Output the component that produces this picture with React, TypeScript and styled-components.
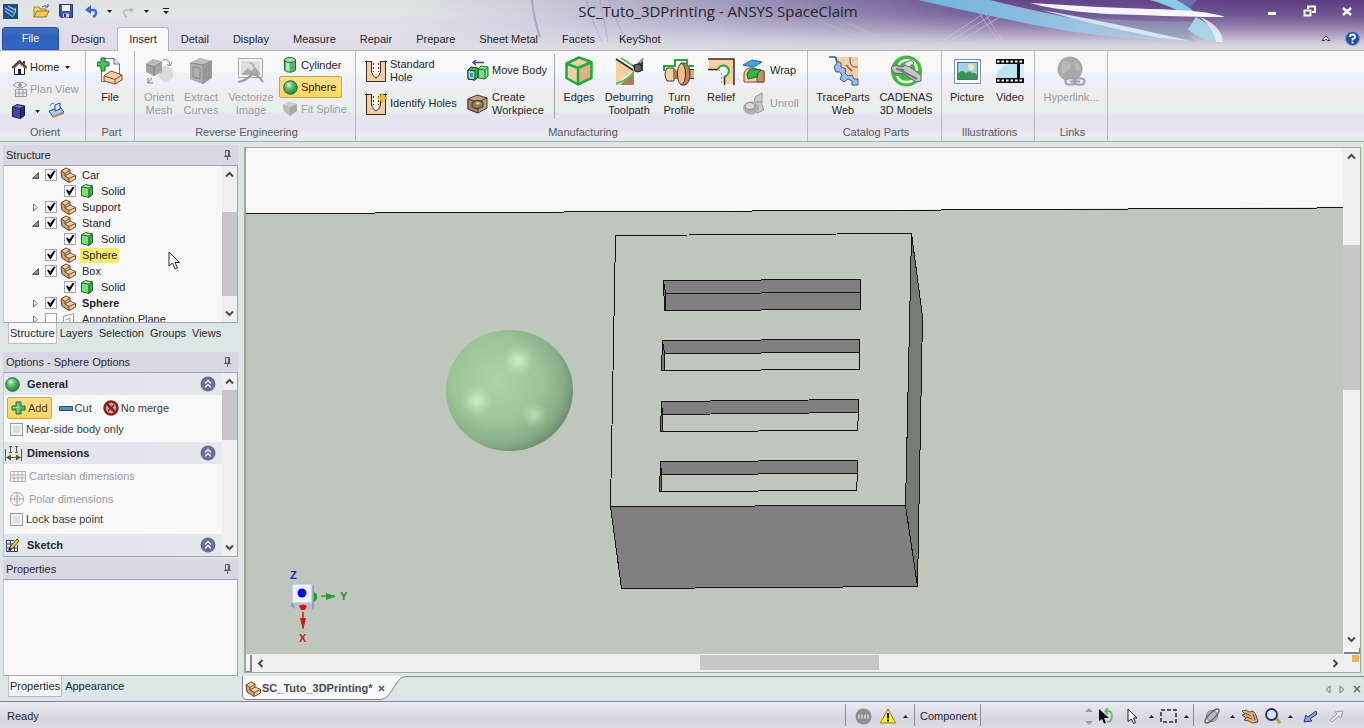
import React from "react";
import styled, { createGlobalStyle, css } from "styled-components";

const GlobalStyle = createGlobalStyle`
  *, *::before, *::after { box-sizing: border-box; }
  html, body { margin: 0; padding: 0; height: 100%; }
  body { font-family: "Liberation Sans", Arial, sans-serif; font-size: 11px; line-height: 13px; color: #26262c; overflow: hidden; }
  #root { height: 100%; }
  button { font: inherit; color: inherit; background: none; border: 0; padding: 0; margin: 0; }
  svg { display: block; flex: none; }
`;

const INK = "#2a2430";
const TAN = "#f4cfa6";
const BROWN = "#7a4a2b";
const GREEN = "#1faa3c";

/* ---------- shell ---------- */

const Shell = styled.div`
  display: flex;
  flex-direction: column;
  height: 100vh;
  background: #dde6e7;
`;

const Header = styled.header`
  position: relative;
  flex: none;
  background: linear-gradient(180deg, #dfe2e2 0, #dfe8e5 16px, #e0dfe8 20px, #dfdce8 100%);
  overflow: hidden;
`;

const Banner = styled.svg`
  position: absolute;
  top: 0;
  right: 0;
`;

const TitleRow = styled.div`
  position: relative;
  display: flex;
  align-items: center;
  height: 22px;
`;

const QuickAccess = styled.div`
  display: flex;
  align-items: center;
  width: 174px;
  padding-left: 3px;
`;

const Slot = styled.button<{ $w: number }>`
  display: flex;
  align-items: center;
  justify-content: center;
  flex: none;
  width: ${(p) => p.$w}px;
  height: 20px;
`;

const QuickDivider = styled.i`
  width: 1px;
  height: 15px;
  margin: 0 6px 0 8px;
  background: #8a8a94;
`;

const AppTitle = styled.h1`
  flex: 1;
  margin: 0;
  font: 400 15px/22px "Open Sans", "Noto Sans", sans-serif;
  text-align: center;
  color: #25222b;
`;

const WindowControls = styled.div`
  display: flex;
  align-items: center;
  justify-content: space-between;
  width: 102px;
  padding: 0 10px 0 3px;
`;

const TabRow = styled.nav`
  position: relative;
  display: flex;
  align-items: stretch;
  height: 29px;
  padding: 5px 4px 0 2px;
  border-bottom: 1px solid #b3b3bd;
`;

const RibbonTab = styled.button<{ $kind?: "file" | "active" }>`
  flex: none;
  height: 23px;
  padding: 0 11px;
  border: 1px solid transparent;
  border-bottom: 0;
  ${(p) =>
    p.$kind === "file" &&
    css`
      width: 57px;
      border: 1px solid #2b52a0;
      border-radius: 3px 3px 0 0;
      color: #f4f6fb;
      background: linear-gradient(180deg, #3f6fc0, #2f62b8 45%, #3268c8);
    `}
  ${(p) =>
    p.$kind === "active" &&
    css`
      height: 24px;
      border-color: #b3b3bd;
      border-radius: 3px 3px 0 0;
      background: #f8f8f8;
    `}
`;

const HeaderTools = styled.div`
  display: flex;
  align-items: center;
  gap: 14px;
  margin-left: auto;
`;

/* ---------- ribbon ---------- */

const Ribbon = styled.section`
  display: flex;
  flex: none;
  height: 91px;
  padding-left: 2px;
  border-bottom: 1px solid #a9aeb8;
  background: linear-gradient(
    180deg,
    #f8f8f8 0, #f8f8f8 21px,
    #edf4f5 22px, #edf4f5 26px,
    #f0eefa 28px, #f0eefa 36px,
    #ededed 38px, #ededed 51px,
    #e8f0ed 53px, #e8f0ed 60px,
    #e6e4ef 63px, #e6e4ef 79px,
    #eaebef 84px, #e6eaec 100%
  );
`;

const Group = styled.div<{ $w: number }>`
  display: flex;
  flex-direction: column;
  flex: none;
  width: ${(p) => p.$w}px;
  border-right: 1px solid #b9b9c4;
`;

const GroupBody = styled.div<{ $pad?: number }>`
  display: flex;
  flex: 1;
  padding: 3px 0 0 ${(p) => p.$pad ?? 0}px;
`;

const GroupLabel = styled.div`
  height: 15px;
  padding-left: 3px;
  text-align: center;
  color: #55565f;
`;

const BigButton = styled.button<{ $w: number }>`
  display: flex;
  flex-direction: column;
  align-items: center;
  flex: none;
  width: ${(p) => p.$w}px;
  height: 66px;
  white-space: pre-line;
  &:disabled { color: #9b9ba3; }
`;

const BigIcon = styled.span`
  display: flex;
  align-items: center;
  justify-content: center;
  height: 34px;
  margin-bottom: 3px;
`;

const Stack = styled.div<{ $w: number; $top?: number }>`
  display: flex;
  flex-direction: column;
  flex: none;
  width: ${(p) => p.$w}px;
  padding-top: ${(p) => p.$top ?? 0}px;
`;

const SmallButton = styled.button<{ $icon: number; $tall?: boolean; $on?: boolean }>`
  display: grid;
  grid-template-columns: ${(p) => p.$icon}px auto auto;
  align-items: center;
  justify-content: start;
  column-gap: 3px;
  height: ${(p) => (p.$tall ? 33 : 22)}px;
  padding: 0 2px 0 3px;
  border: 1px solid transparent;
  border-radius: 2px;
  text-align: left;
  white-space: pre;
  &:disabled { color: #9b9ba3; }
  ${(p) =>
    p.$on &&
    css`
      border-color: #c9a545;
      background: linear-gradient(180deg, #fbe08a, #fbd75e);
    `}
`;

const OrientRow = styled.div`
  display: flex;
  gap: 4px;
`;

const RibbonDivider = styled.i`
  width: 1px;
  height: 65px;
  background: #a6a6b0;
`;

/* ---------- side panels ---------- */

const Main = styled.div`
  display: flex;
  flex: 1;
  min-height: 0;
  padding-top: 3px;
`;

const Side = styled.aside`
  display: flex;
  flex-direction: column;
  flex: none;
  width: 238px;
  padding-left: 2px;
  border-left: 1px solid #e4e4ee;
`;

const PanelTitle = styled.h2`
  display: flex;
  align-items: center;
  justify-content: space-between;
  flex: none;
  height: 20px;
  margin: 0;
  padding: 0 7px 0 3px;
  font-size: 11px;
  font-weight: 400;
  background: #d8d7e3;
`;

const PanelBody = styled.div<{ $h?: number; $gap?: number }>`
  display: flex;
  ${(p) => (p.$h ? css`flex: none; height: ${p.$h}px;` : css`flex: 1;`)}
  margin-bottom: ${(p) => p.$gap ?? 0}px;
  border: 1px solid #a2a2b0;
  border-left-color: #c9c9d4;
  background: #f8f8f8;
  overflow: hidden;
`;

const PanelTabs = styled.div<{ $h: number }>`
  display: flex;
  align-items: flex-start;
  flex: none;
  height: ${(p) => p.$h}px;
  padding-left: 5px;
`;

const PanelTab = styled.button<{ $on?: boolean }>`
  height: 21px;
  padding: 0 2px;
  border: 1px solid transparent;
  border-top: 0;
  ${(p) => p.$on && css`background: #f8f8f8; border-color: #b7bcc6; padding: 0 1px;`}
`;

const Tree = styled.ul`
  flex: 1;
  margin: 0;
  padding: 1px 0 0;
  list-style: none;
`;

const TreeRow = styled.li<{ $child?: boolean }>`
  display: grid;
  grid-template-columns: ${(p) => (p.$child ? "55px 15px 19px" : "25px 14px 15px 19px")} auto;
  align-items: center;
  justify-content: start;
  height: 16px;
  padding-left: ${(p) => (p.$child ? 5 : 2)}px;
`;

const TreeLabel = styled.label<{ $bold?: boolean; $mark?: boolean }>`
  padding: 1px 2px;
  margin-left: 1px;
  font-weight: ${(p) => (p.$bold ? 700 : 400)};
  background: ${(p) => (p.$mark ? "#f6ec6e" : "transparent")};
`;

const TreeBox = styled.input`
  appearance: none;
  display: block;
  width: 12px;
  height: 12px;
  margin: 0;
  border: 1px solid #a4a4a8;
  background: #fcfcfc;
  &:checked::before {
    content: "";
    display: block;
    width: 10px;
    height: 10px;
    background: #050505;
    clip-path: polygon(10% 40%, 25% 35%, 42% 55%, 78% 8%, 96% 10%, 48% 92%, 38% 92%);
  }
`;

const Bar = styled.div<{ $w: number }>`
  display: flex;
  flex-direction: column;
  align-items: center;
  flex: none;
  width: ${(p) => p.$w}px;
  background: #efeff0;
`;

const BarArrow = styled.button`
  display: flex;
  align-items: center;
  justify-content: center;
  flex: none;
  width: 16px;
  height: 17px;
`;

const BarTrack = styled.div<{ $before: number; $thumb: number; $after: number }>`
  display: grid;
  grid-template-rows: ${(p) => `${p.$before}fr ${p.$thumb}fr ${p.$after}fr`};
  flex: 1;
  width: 100%;
  &::before { content: ""; grid-row: 2; background: #c7c7c9; }
`;

const Pointer = styled.svg`
  position: absolute;
  left: 168px;
  top: 251px;
`;

const Options = styled.div`
  flex: 1;
`;

const Section = styled.h3`
  display: grid;
  grid-template-columns: 22px 1fr 22px;
  align-items: center;
  height: 22px;
  margin: 4px 0 0;
  padding-left: 1px;
  font-size: 11px;
  font-weight: 700;
  background: linear-gradient(90deg, #e0e8e9, #e6e3ee 55%, #e3eaea);
  &:first-child { margin-top: 0; }
`;

const OptionRow = styled.div<{ $h: number; $off?: boolean }>`
  display: flex;
  align-items: center;
  gap: 3px;
  height: ${(p) => p.$h}px;
  padding-left: 3px;
  color: ${(p) => (p.$off ? "#9a9aa0" : "#3a3a42")};
`;

const Mode = styled.button<{ $on?: boolean }>`
  display: flex;
  align-items: center;
  gap: 2px;
  height: 22px;
  padding: 0 3px;
  border: 1px solid transparent;
  ${(p) => p.$on && css`border-color: #c9a545; border-radius: 2px; background: linear-gradient(180deg, #f9dc86, #fbd75e);`}
`;

const OptionCheck = styled.label`
  display: flex;
  align-items: center;
  gap: 3px;
  padding-left: 3px;
`;

const OptionBox = styled.input`
  appearance: none;
  width: 13px;
  height: 13px;
  margin: 0;
  border: 1px solid #95989f;
  background: #dcdee2;
  box-shadow: inset 0 0 0 2px #f3f3f5;
`;

const OptionButton = styled.button`
  display: grid;
  grid-template-columns: 16px auto;
  align-items: center;
  gap: 3px;
  padding-left: 3px;
`;

/* ---------- workspace ---------- */

const Work = styled.main`
  display: flex;
  flex-direction: column;
  flex: 1;
  min-width: 0;
  padding: 2px 0 0 6px;
`;

const Frame = styled.div`
  display: grid;
  grid-template-columns: 1fr 17px;
  grid-template-rows: 1fr 18px;
  flex: 1;
  min-height: 0;
  margin-right: 3px;
  border: 1px solid #a5a98c;
  border-left-width: 2px;
  background: #efefef;
`;

const Scene = styled.svg`
  width: 100%;
  height: 100%;
  min-height: 0;
`;

const HBar = styled.div`
  display: flex;
  align-items: stretch;
  padding-top: 1px;
`;

const SplitV = styled.i`
  width: 6px;
  border-right: 2px solid #85858c;
  border-bottom: 1px solid #85858c;
  background: #f5f5f5;
`;

const SplitH = styled.i`
  flex: none;
  width: 16px;
  height: 6px;
  border-right: 1px solid #85858c;
  border-bottom: 2px solid #85858c;
  background: #f5f5f5;
`;

const HTrack = styled.div`
  display: grid;
  grid-template-columns: 431fr 178fr 447fr;
  flex: 1;
  &::before { content: ""; grid-column: 2; margin-bottom: 2px; background: #c7c7c9; }
`;

const Corner = styled.div`
  padding: 1px 0 0 9px;
  &::before { content: ""; display: block; width: 7px; height: 7px; background: #efb35f; }
`;

const DocStrip = styled.div`
  display: flex;
  flex: none;
  align-items: stretch;
  height: 28px;
  padding: 3px 0 0;
`;

const DocTab = styled.div`
  position: relative;
  display: flex;
  align-items: center;
  flex: none;
  width: 162px;
  padding-left: 3px;
  margin-left: -2px;
  font-weight: 700;
  color: #4a4a54;
`;

const TabShape = styled.svg`
  position: absolute;
  left: 0;
  top: 0;
`;

const DocName = styled.span`
  position: relative;
  flex: none;
  width: 116px;
`;

const Above = styled.span`
  position: relative;
`;

const Indent = styled.span`
  display: block;
  padding-left: 2px;
`;

const DocRest = styled.div`
  display: flex;
  flex: 1;
  align-items: center;
  justify-content: flex-end;
  border-top: 1px solid #83878f;
`;

const Status = styled.footer`
  display: flex;
  align-items: center;
  flex: none;
  height: 27px;
  border-top: 1px solid #83878f;
  background: linear-gradient(180deg, #eceaf4 0, #e2e1ea 9px, #d6d6e0 16px, #dcdde2 100%);
`;

const StatusText = styled.div`
  flex: 1;
  padding: 3px 0 0 7px;
`;

const StatusPart = styled.div<{ $w: number; $line?: boolean }>`
  display: flex;
  align-items: center;
  flex: none;
  width: ${(p) => p.$w}px;
  height: 22px;
  padding-top: 2px;
  border-left: 1px solid ${(p) => (p.$line ? "#8d8d97" : "transparent")};
`;

const StatusLabel = styled.span`
  padding: 2px 0 1px 5px;
`;

/* ---------- icons ---------- */

type PicProps = { w: number; h: number; vb?: string; children: React.ReactNode };
const Pic = ({ w, h, vb, children }: PicProps) => (
  <svg width={w} height={h} viewBox={vb ?? `0 0 ${w} ${h}`} fill="none" aria-hidden="true">
    {children}
  </svg>
);

const Caret = ({ up }: { up?: boolean }) => (
  <Pic w={5} h={3}>
    <path d={up ? "M0 3H5L2.500 0z" : "M0 0H5L2.500 3z"} fill="#222" />
  </Pic>
);

const Chevron = ({ turn }: { turn: number }) => (
  <Pic w={9} h={9}>
    <path d="M1 6.500 4.500 3 8 6.500" stroke="#4a4a4e" strokeWidth="2" transform={`rotate(${turn} 4.500 4.500)`} />
  </Pic>
);

const Pin = () => (
  <Pic w={7} h={10}>
    <path d="M1.500.5H5.500V6H1.500zM4.500.5V6M0 6.500H7M3.500 7V10" stroke="#5d5d6c" />
  </Pic>
);

const Logo = () => (
  <Pic w={15} h={15}>
    <path d="M0 0H15V15H0z" fill="#1d4d86" />
    <path d="M2 4 11 9M2 7 9 12M5 2 12 6" stroke="#7bb6dc" strokeWidth="1.500" />
    <path d="M12 4Q14 8 9 13" stroke="#a8d2ea" />
  </Pic>
);

const Folder = () => (
  <Pic w={17} h={14}>
    <path d="M1 13V3h5l1 2h6v2" fill="#f2d37a" stroke="#a37c2a" />
    <path d="M1 13 4 7H16L13 13z" fill="#f8c85a" stroke="#9b7423" />
    <path d="M9 3Q12 0 15 3M15 3V0M15 3H12" stroke="#3e6fae" />
  </Pic>
);

const Save = () => (
  <Pic w={14} h={14}>
    <path d="M.5.5H13.500V13.500H2L.5 12z" fill="#4552b4" stroke="#2c3480" />
    <path d="M3 1H11V7H3z" fill="#eef0fb" />
    <path d="M4 9.500H10V13.500H4z" fill="#c9cdea" />
    <path d="M5 10H7V13H5z" fill="#2c3480" />
  </Pic>
);

const Undo = ({ off }: { off?: boolean }) => (
  <Pic w={13} h={13}>
    <g transform={off ? "translate(13 0) scale(-1 1)" : undefined}>
      <path d="M2 5H8Q11.500 5 11 8.500Q10.500 11 8 12" stroke={off ? "#b9bac0" : "#3b6cc0"} strokeWidth={off ? 1.5 : 2.5} />
      <path d={off ? "M1 5 5 2V8z" : "M0 5 6 0V9z"} fill={off ? "#b9bac0" : "#3b6cc0"} />
    </g>
  </Pic>
);

const HomeIcon = () => (
  <Pic w={15} h={15}>
    <path d="M2.500 8 7.500 3 12.500 8V14.500H2.500z" fill="#fff" stroke="#1b1b2b" />
    <path d="M0 8 7.500 1 15 8" stroke="#5b3323" strokeWidth="2" />
    <path d="M6 9H9V14.500H6z" fill="#1b1b3b" />
    <path d="M11 1H13V5L11 3z" fill="#5b3323" />
  </Pic>
);

const PlanIcon = () => (
  <Pic w={16} h={16}>
    <path d="M1 4Q8-2 15 4Q8 10 1 4z" stroke="#98989c" />
    <circle cx="8" cy="4" r="2" fill="#98989c" />
    <path d="M3.500 8.500H14.500V15.500H3.500zM3.500 12H14.500M7 8.500V15.500M11 8.500V15.500" stroke="#98989c" />
  </Pic>
);

const Cube = ({ w = 13, h = 15, top, front, side, edge }: { w?: number; h?: number; top: string; front: string; side: string; edge: string }) => (
  <Pic w={w} h={h} vb="0 0 13 15">
    <path d="M.5 3 5 .5 12.500 2 8.500 4.500z" fill={top} />
    <path d="M.5 3 8.500 4.500V14.500L.5 12.500z" fill={front} />
    <path d="M8.500 4.500 12.500 2V11.500L8.500 14.500z" fill={side} />
    <path d="M.5 3 5 .5 12.500 2V11.500L8.500 14.500.5 12.500zM.5 3 8.500 4.500 12.500 2M8.500 4.500V14.500" stroke={edge} strokeLinejoin="round" />
  </Pic>
);

const SketchPlane = () => (
  <Pic w={17} h={16}>
    <path d="M1 9 12 5 16 10 5 15z" fill="#a9c8ee" stroke="#33477e" />
    <path d="M4 14 16 10V12L5 16z" fill="#b98a6a" />
    <path d="M7 9V3L12 1V7z" fill="#dbe7fa" stroke="#33477e" />
    <path d="M2 4Q3 1 6 1" stroke="#4c65a8" />
  </Pic>
);

const PartFile = () => (
  <Pic w={27} h={30}>
    <path d="M4.500 2.500H17L22.500 8V25.500H4.500z" fill="#fafafe" stroke="#6a6f9a" />
    <path d="M17 2.500V8H22.500" fill="#dfe2f3" stroke="#6a6f9a" />
    <path d="M4 2H8V6H12V10H8V15H4V10H0V6H4z" fill="#4fc25f" stroke="#146b28" />
    <path d="M7 20 14 15 25 19V24L18 28 7 25z" fill={TAN} stroke={BROWN} />
    <path d="M7 20 18 23.500 25 19M18 23.500V28" stroke={BROWN} />
  </Pic>
);

const OrientMesh = () => (
  <Pic w={28} h={30}>
    <path d="M14 13 21 9 28 13V22L21 27 14 22z" fill="#dcdcde" />
    <path d="M1 8 8 3 17 6V16L9 20 1 16z" fill="#a3a3a6" />
    <path d="M1 8 8 3 17 6 9 11z" fill="#b9b9bb" />
    <path d="M9 11V20M1 8 9 11 17 6" stroke="#85858a" />
    <path d="M18 4Q24 2 25 9M22 8 25 10 27 6M8 27 3 27V22M3 27 7 22" stroke="#808085" />
  </Pic>
);

const ExtractCurves = () => (
  <Pic w={26} h={28}>
    <path d="M2 6 12 1 24 4V21L15 27 2 22z" fill="#9b9b9f" />
    <path d="M2 6 12 1 24 4 15 8z" fill="#bebec1" />
    <path d="M2 6 15 8V27L2 22z" fill="#afafb2" />
    <path d="M5 10 12 11V22L5 20zM2 6 15 8 24 4M15 8V27M18 10 21 8V20L18 22z" stroke="#8a8a8f" />
  </Pic>
);

const VectorImage = () => (
  <Pic w={28} h={28}>
    <path d="M1.500 1.500H25.500V20.500H1.500z" fill="#f4f4f5" stroke="#a9a9ad" />
    <path d="M4 4H23V18H4z" fill="#dededf" />
    <path d="M5 17 11 11 14 14 18 10 23 16V18H5z" fill="#aaaaad" />
    <path d="M12 6Q17 6 17 11" stroke="#b9b9bb" strokeWidth="2" />
    <path d="M1 25Q8 24 13 19T26 25" stroke="#9a9a9e" strokeWidth="2" />
  </Pic>
);

const Cylinder = () => (
  <Pic w={14} h={16}>
    <path d="M1.500 3V13Q7 17.500 12.500 13V3z" fill="#58b568" stroke="#1d6a31" />
    <path d="M3 5V13Q5 14.500 6.500 14.500V5.500z" fill="#b9e8bd" />
    <ellipse cx="7" cy="3" rx="5.500" ry="2.500" fill="#9be0a3" stroke="#1d6a31" />
  </Pic>
);

const Ball = () => (
  <Pic w={15} h={15}>
    <defs>
      <radialGradient id="ball" cx=".38" cy=".32" r=".7">
        <stop offset="0" stopColor="#d9f7d6" />
        <stop offset=".4" stopColor="#63bf6a" />
        <stop offset="1" stopColor="#267a38" />
      </radialGradient>
    </defs>
    <circle cx="7.500" cy="7.500" r="6.800" fill="url(#ball)" stroke="#1f6a31" />
  </Pic>
);

const FitSpline = () => (
  <Pic w={14} h={14}>
    <path d="M0 3 6 0 14 2V9L7 14 1 9z" fill="#a6a6aa" />
    <path d="M0 3 6 0 14 2 7 5z" fill="#cfcfd2" />
    <path d="M7 5V14L1 9 0 3z" fill="#bcbcc0" />
  </Pic>
);

const HoleIcon = ({ star }: { star?: boolean }) => (
  <Pic w={22} h={22}>
    <path d="M1 1H21V21H1z" fill={TAN} />
    <path d="M6 1V12Q8 18 11 18T16 12V1z" fill="#f7f3ee" />
    <path d="M1.500.5V21.500H20.500V.5M0 1.500H6M16 1.500H22M6.500 1V12Q8 17 11 18Q14 17 15.500 12V1" stroke="#3b2a24" />
    <path d="M8.500 3V12M13.500 3V12" stroke="#3b2a24" strokeDasharray="2 2" />
    {star && <path d="M17 0 18.500 3.500 22 5 18.500 6.500 17 10 15.500 6.500 12 5 15.500 3.500z" fill="#f3b62c" stroke="#f3b62c" />}
  </Pic>
);

const MoveBody = () => (
  <Pic w={22} h={21}>
    <path d="M6 2.500H17M9 0 6 2.500 9 5" stroke="#344c9a" strokeWidth="1.500" />
    <path d="M11 9 14 6 21 7V16L18 19 11 18z" fill="#7fdb8a" stroke="#1c7b32" />
    <path d="M11 9 18 10 21 7M18 10V19" stroke="#1c7b32" />
    <path d="M1 10 4 7 11 8V17L8 20 1 19z" fill="#3fb558" stroke="#12401f" />
    <path d="M1 10 8 11V20L1 19z" fill="#9ee0c8" stroke="#12401f" />
    <path d="M3 13H6V17H3z" fill="#2f8fd0" />
  </Pic>
);

const Workpiece = () => (
  <Pic w={21} h={20}>
    <path d="M1 5 10 1 20 4V14L11 19 1 15z" fill="#c9a08c" stroke="#4f342c" />
    <path d="M1 5 11 8V19L1 15z" fill="#ae8272" stroke="#4f342c" />
    <path d="M11 8 20 4" stroke="#4f342c" />
    <path d="M5 9 10 6 16 8V13L10 15 5 13z" fill="#8a8455" stroke="#3f3220" />
    <path d="M8 9 11 8 14 9 11 11z" fill="#d8c49a" />
  </Pic>
);

const Edges = () => (
  <Pic w={28} h={30}>
    <path d="M1.500 7.500 14 1.500 26.500 6V22L13 28.500 1.500 22z" fill={TAN} />
    <path d="M13 12 26.500 6V22L13 28.500z" fill="#dcb08a" />
    <path d="M1.500 7.500 14 1.500 26.500 6V22L13 28.500 1.500 22zM1.500 7.500 13 12 26.500 6M13 12V28" stroke={GREEN} strokeWidth="2.500" strokeLinejoin="round" />
  </Pic>
);

const Deburr = () => (
  <Pic w={29} h={29}>
    <path d="M1 2 19 13 1 27z" fill={TAN} />
    <path d="M5 28 19 15V28z" fill="#b07f57" />
    <path d="M1 2 18 13" stroke="#33251f" strokeWidth="1.500" />
    <path d="M6 1 20 10M1 27Q17 21 20 12" stroke="#4fc060" strokeWidth="2" />
    <path d="M28 1V14L20 12 17 8 22 7z" fill="#3c3c40" />
    <circle cx="23" cy="11" r="4" fill="#63636a" stroke="#222" />
    <path d="M25 6 28 1" stroke="#9a9aa2" strokeWidth="2" />
  </Pic>
);

const TurnProfile = () => (
  <Pic w={32} h={29}>
    <path d="M10 12H31V21H10z" fill="#d9a981" />
    <path d="M4 11Q0 17 4 24H11V11z" fill={TAN} stroke="#4f3021" />
    <path d="M11 14H16V22H11z" fill="#a8774f" />
    <path d="M18 6H22Q27 8 27 17T22 28H18z" fill="#b98560" stroke="#4f3021" />
    <ellipse cx="18.500" cy="17" rx="4" ry="10.500" fill="#eec095" stroke="#4f3021" />
    <path d="M27 12.500H31M27 21.500H31" stroke="#4f3021" />
    <path d="M1 14V9H12V3H24V9H31" stroke={GREEN} strokeWidth="2" />
  </Pic>
);

const Relief = () => (
  <Pic w={27} h={27}>
    <path d="M1 1H26V26H16V14H13V11H1z" fill={TAN} />
    <circle cx="15" cy="13" r="4.500" fill="#fbf6ef" />
    <path d="M0 1H26V27M16.500 18V27M0 11.500H10" stroke="#3b2a24" strokeWidth="1.500" />
    <path d="M3 12.500H12M13.500 15V26" stroke="#a08a80" strokeDasharray="2 2" />
    <path d="M10 12A5.500 5.500 0 1 1 16 18.500" stroke={GREEN} strokeWidth="2" />
  </Pic>
);

const Wrap = () => (
  <Pic w={22} h={24}>
    <path d="M1 14Q3 8 10 9L21 12V23H1z" fill={TAN} stroke={BROWN} />
    <path d="M14 23V14Q17 10 21 12V23z" fill="#c28d68" stroke={BROWN} />
    <path d="M4 15Q6 9 11 10L18 11Q14 14 14 18L5 20z" fill="#35b04c" stroke="#136a27" />
    <path d="M0 6 9 1 19 3 11 8z" fill="#4aa5dc" stroke="#2068a0" />
  </Pic>
);

const Unroll = () => (
  <Pic w={22} h={24}>
    <path d="M12 5 19 1V13L21 18 14 21 11 15z" fill="#cacace" stroke="#98989c" />
    <ellipse cx="8" cy="16" rx="8" ry="6.500" fill="#aeaeb2" />
    <ellipse cx="7" cy="14" rx="5" ry="3.500" fill="#d6d6d9" stroke="#929296" />
    <path d="M13 10H18" stroke="#929296" />
  </Pic>
);

const Gear = () => (
  <Pic w={31} h={30}>
    <path d="M7 1H30V22Q24 24 21 19Q13 17 12 10Q6 8 7 1z" fill={TAN} />
    <path d="M30 11Q22 12 22 5L22 1" stroke="#7c5536" />
    <path d="M18 9 24 15" stroke="#7c5536" strokeWidth="1.500" />
    <path
      d="M1 1H7L9 7 6 11 8 16 12 16 14 19 12 23 16 26 20 23 24 25V29H30V23H26L24 19 20 20 17 17 18 13 13 11 13 7 9 5 8 1z"
      fill="#9cc0e6"
      stroke="#3f5878"
    />
  </Pic>
);

const Cadenas = () => (
  <Pic w={33} h={33}>
    <circle cx="16.500" cy="16" r="15.500" fill="#45b93e" />
    <path d="M9 10Q10 6 17 5Q27 6 27 16M7 21Q10 28 18 27Q24 26 26 22" stroke="#e4f6e2" strokeWidth="2.500" />
    <path d="M1 13 5 10 12 12 18 9 20 12 31 20V26L26 27 14 19 4 18z" fill="#c3c5c8" stroke="#5d6065" />
    <path d="M10 15 27 24M6 14 14 15" stroke="#74777c" strokeWidth="2" />
    <path d="M13 9 21 5 24 8 19 12z" fill="#e2e3e5" stroke="#777" />
  </Pic>
);

const Picture = () => (
  <Pic w={27} h={25}>
    <path d="M.5.5H26.500V24.500H.5z" fill="#fdfdfd" stroke="#7c8fa8" />
    <path d="M3.500 3.500H23.500V20.500H3.500z" fill="#9fd2ee" stroke="#3a74a8" />
    <circle cx="17" cy="8" r="3" fill="#fbe9ae" />
    <path d="M4 20V14Q8 10 12 14Q16 11 18 14Q21 13 23 16V20z" fill="#3f9548" />
  </Pic>
);

const Video = () => (
  <Pic w={28} h={26}>
    <path d="M0 1H28V25H0z" fill="#111" />
    <path d="M0 6H21V20H0z" fill="#bfe2f5" />
    <path d="M0 6H10L0 16z" fill="#e4f4fc" />
    <path d="M24 6H28V20H24z" fill="#d8ecf6" />
    <path d="M1 3.500H28M1 22.500H28" stroke="#f4f4f4" strokeWidth="2" strokeDasharray="2.500 2" />
  </Pic>
);

const Hyperlink = () => (
  <Pic w={29} h={30}>
    <circle cx="13" cy="13" r="12.500" fill="#a9a9ac" />
    <path d="M6 6Q11 3 13 8T9 16 7 20Q2 14 6 6zM17 5 22 8 23 15 18 14z" fill="#b9b9bc" />
    <rect x="8.500" y="22.500" width="10" height="6" rx="3" stroke="#a2a2a6" strokeWidth="2" fill="#ededf0" />
    <rect x="17.500" y="22.500" width="10" height="6" rx="3" stroke="#a2a2a6" strokeWidth="2" fill="#ededf0" />
    <path d="M13 25.500H23" stroke="#a2a2a6" strokeWidth="2" />
  </Pic>
);

const Help = () => (
  <Pic w={15} h={15}>
    <circle cx="7.500" cy="7.500" r="7" fill="#1f4fae" stroke="#7f9bd0" />
    <path d="M5 6Q5 3.500 7.500 3.500T10 6Q10 7.500 7.500 8V9.500M7.500 10.500V12.500" stroke="#fff" strokeWidth="1.800" />
  </Pic>
);

const Component = () => (
  <Pic w={17} h={16}>
    <path d="M1 4 6 1 10 3V7L15 9V12L9 15.500 2 11z" fill={TAN} />
    <path d="M2 11 9 15.500V11L5 9V6L1 4z" fill="#d9a577" />
    <path d="M1 4 6 1 10 3 5 6.500zM5 6.500V9L9 11.500 15.500 8.500 10 6V3M1 4 2 11 9 15.500 15.500 12V8.500M9 11.500V15.500M5 9 10 6" stroke="#6a4028" strokeLinejoin="round" />
  </Pic>
);

const SolidIcon = () => <Cube w={12} h={14} top="#a8f2a6" front="#7be07c" side="#3fa848" edge="#145a20" />;

const AnnotationIcon = () => (
  <Pic w={13} h={15}>
    <path d="M1.500 4.500 11.500 1.500V13M1.500 4.500V14M4 8 8 6V11" stroke="#9a9aa0" />
  </Pic>
);

const Twist = ({ open }: { open: boolean }) => (
  <Pic w={9} h={9}>
    {open ? <path d="M7.500 1.500V7.500H1.500z" fill="#8a8a8e" stroke="#555" /> : <path d="M2.500 1V8L6.500 4.500z" stroke="#77777b" />}
  </Pic>
);

const Collapse = () => (
  <Pic w={16} h={16}>
    <circle cx="8" cy="8" r="7.500" fill="#6a6c9c" />
    <path d="M5 7.500 8 4.500 11 7.500M5 11.500 8 8.500 11 11.500" stroke="#f0f0fa" strokeWidth="1.500" />
  </Pic>
);

const Plus = () => (
  <Pic w={15} h={14}>
    <path d="M5 1H10V5H14V9H10V13H5V9H1V5H5z" fill="#4fb95c" stroke="#1d6b3a" />
    <path d="M7 2V12M2 6.500H8" stroke="#a7e2ac" />
  </Pic>
);

const Minus = () => (
  <Pic w={14} h={5}>
    <path d="M.5.5H13.500V4.500H.5z" fill="#5a8fb8" stroke="#27506f" />
  </Pic>
);

const NoMerge = () => (
  <Pic w={16} h={16}>
    <circle cx="8" cy="8" r="6.500" fill="#caa0a0" stroke="#8c1e22" strokeWidth="2.500" />
    <path d="M3.500 3.500 12.500 12.500" stroke="#8c1e22" strokeWidth="2.500" />
    <path d="M5 11 11 5" stroke="#5a3030" strokeWidth="1.500" />
  </Pic>
);

const DimensionIcon = () => (
  <Pic w={17} h={16}>
    <path d="M.5 4V16M16.500 4V16M4 1.500H7M5.500 1.500V7M4 7.500H7M10 1.500H13M11.500 1.500V7M10 7.500H13" stroke="#5a5a62" />
    <path d="M3 12.500H14" stroke="#6b5410" />
    <path d="M1 12.500 6 9.500V15.500zM16 12.500 11 9.500V15.500z" fill="#6b5410" />
  </Pic>
);

const GridIcon = () => (
  <Pic w={16} h={11}>
    <path d="M.5.5H15.500V10.500H.5zM.5 4H15.500M.5 7H15.500M4 .5V10.500M8 .5V10.500M12 .5V10.500" stroke="#b0b0b5" />
  </Pic>
);

const PolarIcon = () => (
  <Pic w={14} h={14}>
    <circle cx="7" cy="7" r="6.500" stroke="#a6a6ab" />
    <circle cx="7" cy="7" r="3" stroke="#c5c5ca" />
    <path d="M0 7H14M7 0V14" stroke="#a6a6ab" />
  </Pic>
);

const SketchIcon = () => (
  <Pic w={15} h={15}>
    <path d="M1.500 2V13.500H12.500M1.500 6H9M5.500 2V13M9.500 6V13M1.500 10H12M1 2.500H9M12.500 7V14" stroke="#3a3f6e" />
    <path d="M4 12 5 9 12 1 14 3 7 11z" fill="#f2c43a" stroke="#6b4c10" />
    <path d="M3 13 5 9 7 11z" fill="#1c1c1c" />
  </Pic>
);

const Triad = () => (
  <g>
    <path d="M314 592Q318 594 317 599L314 602z" fill="#1d9b35" />
    <path d="M292 601 291 606 295 609H313L314 606V586L312 584z" fill="#8d99b8" />
    <path d="M293 603H312V609H295z" fill="#b8c0cf" />
    <path d="M292 584H312V603H292z" fill="#eef2fb" stroke="#aebbe0" />
    <circle cx="302" cy="593" r="4.500" fill="#0a0ae0" />
    <path d="M299 606Q303 603 307 606L305 610H301z" fill="#e01010" />
    <path d="M303 612V628" stroke="#d81414" strokeWidth="1.500" />
    <path d="M300 618H306L303 630z" fill="#d81414" />
    <path d="M321 596H335" stroke="#2b9d3c" strokeWidth="1.500" />
    <path d="M326 593 336 596.500 326 600z" fill="#2b9d3c" />
    <g fontFamily="Liberation Sans, sans-serif" fontSize="11" fontWeight="700">
      <text x="290" y="579" fill="#1c1cd0">Z</text>
      <text x="340" y="600" fill="#2b8a3c">Y</text>
      <text x="299" y="642" fill="#d01c1c">X</text>
    </g>
  </g>
);

const slots = [
  { outer: "663,280 860,279 860,309 664,310", top: "663,280 860,279 860,292 665,293", rest: "665,293 860,292 860,309 665,310", solid: true },
  { outer: "662,340 859,339 859,369 661,370", top: "662,340 859,339 859,352 664,353", rest: "664,353 859,352 859,369 664,370" },
  { outer: "661,401 858,399 857,430 660,431", top: "661,401 858,399 858,412 662,414", rest: "662,414 858,412 857,430 662,431" },
  { outer: "660,461 857,460 856,490 659,491", top: "660,461 857,460 857,473 661,474", rest: "661,474 857,473 856,490 661,491" },
];

const Viewport = () => (
  <Scene viewBox="246 148 1097 506" preserveAspectRatio="xMidYMid slice" role="img" aria-label="3D model view">
    <defs>
      <radialGradient id="orb" cx=".4" cy=".42" r=".62">
        <stop offset="0" stopColor="#a8d4a6" />
        <stop offset=".55" stopColor="#9cc69a" />
        <stop offset=".85" stopColor="#88ac88" />
        <stop offset="1" stopColor="#6f8f72" />
      </radialGradient>
      <radialGradient id="spot">
        <stop offset="0" stopColor="#c9f3c2" />
        <stop offset=".35" stopColor="#bfe9b9" stopOpacity=".8" />
        <stop offset="1" stopColor="#a8d4a6" stopOpacity="0" />
      </radialGradient>
    </defs>
    <path d="M0 0H1600V900H0z" fill="#f8f8f8" />
    <path d="M0 215 1600 206V900H0z" fill="#bfc7bc" />
    <g stroke="#151515" strokeWidth="1" shapeRendering="crispEdges" strokeLinejoin="round" transform="translate(.5 .5)">
      <path d="M0 214.500 1600 206" />
      <polygon points="911,233 922,316 917,586 905,506" fill="#747d74" />
      <polygon points="615,235 911,233 905,505 610,506" fill="#c0c8be" />
      <polygon points="610,506 905,505 917,586 621,588" fill="#808080" />
      {slots.map((s) => (
        <g key={s.outer}>
          <polygon points={s.outer} fill="#747d74" />
          <polygon points={s.top} fill="#808080" />
          <polygon points={s.rest} fill={s.solid ? "#808080" : "#c0c8be"} />
        </g>
      ))}
    </g>
    <ellipse cx="509.500" cy="390.500" rx="63.500" ry="60.500" fill="url(#orb)" />
    <circle cx="518" cy="361" r="17" fill="url(#spot)" />
    <circle cx="477" cy="401" r="17" fill="url(#spot)" />
    <circle cx="534" cy="415" r="14" fill="url(#spot)" opacity=".6" />
    <Triad />
  </Scene>
);

const HeaderArt = () => (
  <Banner width="964" height="51" viewBox="400 0 964 51" aria-hidden="true">
    <defs>
      <linearGradient id="violet" x1="0" x2="1" y1="0" y2="0">
        <stop offset="0" stopColor="#8f83b4" stopOpacity="0" />
        <stop offset=".12" stopColor="#8d82b4" stopOpacity=".2" />
        <stop offset=".25" stopColor="#8377ab" stopOpacity=".5" />
        <stop offset=".45" stopColor="#71609a" stopOpacity=".8" />
        <stop offset=".62" stopColor="#62478a" />
        <stop offset="1" stopColor="#5b3d80" />
      </linearGradient>
      <linearGradient id="fade" x1="0" x2="0" y1="0" y2="1">
        <stop offset="0" stopColor="#e0dde8" stopOpacity="0" />
        <stop offset=".3" stopColor="#e0dde8" stopOpacity=".15" />
        <stop offset=".55" stopColor="#e0dde8" stopOpacity=".45" />
        <stop offset=".85" stopColor="#dddce3" stopOpacity=".9" />
        <stop offset="1" stopColor="#dfdfe3" />
      </linearGradient>
      <linearGradient id="ribbonBlue" x1="0" x2="1" y1="0" y2="0">
        <stop offset="0" stopColor="#6fb3dc" />
        <stop offset=".6" stopColor="#9ccbe6" stopOpacity=".9" />
        <stop offset="1" stopColor="#c5dcea" stopOpacity=".4" />
      </linearGradient>
    </defs>
    <path d="M400 0H1364V51H400z" fill="url(#violet)" />
    <path d="M400 0H1364V51H400z" fill="url(#fade)" />
    <path d="M532 0Q534 20 540 37" stroke="#8175b4" strokeOpacity=".5" strokeWidth="2" fill="none" />
    <path d="M586 0Q592 22 602 42M600 0 608 42M608 0 626 42" stroke="#8175b4" strokeOpacity=".35" fill="none" />
    <path d="M690 5 740 44M800 12 860 38M820 10 880 38" stroke="#d5cfe6" strokeOpacity=".3" fill="none" />
    <path d="M944 40 986 12M952 40 996 12M962 40 1008 12M978 12 998 40M984 12 1002 40" stroke="#cfc9e2" strokeOpacity=".6" fill="none" />
    <path d="M1030 14Q1130 22 1198 22L1188 34 1196 42Q1110 36 1030 14z" fill="#8e9cb8" opacity=".55" />
    <path d="M918 0H990Q1060 18 1180 38L1200 42Q1110 40 1040 26T918 0z" fill="url(#ribbonBlue)" />
    <path d="M1042 10Q1110 22 1190 41L1160 38Q1090 24 1042 10z" fill="#d9ebf5" opacity=".9" />
    <path d="M1150 0H1177Q1192 8 1198 16L1184 14Q1166 4 1150 0z" fill="#8cc8e8" />
    <path d="M1177 0H1197L1190 8z" fill="#6d6db2" />
    <path d="M1196 17Q1216 28 1222 40L1210 42Q1192 34 1188 29z" fill="#a9d8e6" opacity=".95" />
    <path d="M1200 17Q1222 26 1223 42L1216 42Q1214 28 1200 17z" fill="#e4ecf2" opacity=".9" />
    <path d="M1030 3Q1090 7 1150 9Q1206 10 1225 17Q1190 17 1140 15Q1070 14 1030 3z" fill="#f7f5fa" />
  </Banner>
);

/* ---------- content ---------- */

const tabs = ["Design", "Insert", "Detail", "Display", "Measure", "Repair", "Prepare", "Sheet Metal", "Facets", "KeyShot"];

type BigProps = { w: number; icon: React.ReactNode; text: string; off?: boolean };
const Big = ({ w, icon, text, off }: BigProps) => (
  <BigButton $w={w} disabled={off}>
    <BigIcon>{icon}</BigIcon>
    {text}
  </BigButton>
);

type SmallProps = { icon: React.ReactNode; text: string; size: number; tall?: boolean; on?: boolean; off?: boolean; menu?: boolean };
const Small = ({ icon, text, size, tall, on, off, menu }: SmallProps) => (
  <SmallButton $icon={size} $tall={tall} $on={on} disabled={off}>
    {icon}
    <span>{text}</span>
    {menu && <Caret />}
  </SmallButton>
);

type Node = { name: string; kind: "part" | "solid" | "note"; open?: boolean; leaf?: boolean; bold?: boolean; mark?: boolean };
const nodes: Node[] = [
  { name: "Car", kind: "part", open: true },
  { name: "Solid", kind: "solid" },
  { name: "Support", kind: "part", open: false },
  { name: "Stand", kind: "part", open: true },
  { name: "Solid", kind: "solid" },
  { name: "Sphere", kind: "part", leaf: true, mark: true },
  { name: "Box", kind: "part", open: true },
  { name: "Solid", kind: "solid" },
  { name: "Sphere", kind: "part", open: false, bold: true },
  { name: "Annotation Plane", kind: "note", open: false },
];

const TreeItem = ({ node, id }: { node: Node; id: string }) => {
  const child = node.kind === "solid";
  return (
    <TreeRow $child={child}>
      <span />
      {!child && (node.leaf ? <span /> : <Twist open={!!node.open} />)}
      <TreeBox type="checkbox" id={id} defaultChecked={node.kind !== "note"} />
      {child ? <Indent><SolidIcon /></Indent> : node.kind === "note" ? <Indent><AnnotationIcon /></Indent> : <Component />}
      <TreeLabel htmlFor={id} $bold={node.bold} $mark={node.mark}>{node.name}</TreeLabel>
    </TreeRow>
  );
};

export default function App() {
  return (
    <Shell>
      <GlobalStyle />
      <Header>
        <HeaderArt />
        <TitleRow>
          <QuickAccess>
            <Logo />
            <QuickDivider />
            <Slot $w={18} aria-label="Open"><Folder /></Slot>
            <Slot $w={32} aria-label="Save"><Save /></Slot>
            <Slot $w={18} aria-label="Undo"><Undo /></Slot>
            <Slot $w={18} aria-label="Undo list"><Caret /></Slot>
            <Slot $w={20} aria-label="Redo"><Undo off /></Slot>
            <Slot $w={16} aria-label="Redo list"><Caret /></Slot>
            <Slot $w={24} aria-label="Customize">
              <Pic w={6} h={6}><path d="M0 .5H6" stroke="#222" /><path d="M0 3H6L3 6z" fill="#222" /></Pic>
            </Slot>
          </QuickAccess>
          <AppTitle>SC_Tuto_3DPrinting - ANSYS SpaceClaim</AppTitle>
          <WindowControls>
            <Slot $w={14} aria-label="Minimize"><Pic w={10} h={10}><path d="M1 7.500H9" stroke="#fff" strokeWidth="3" /></Pic></Slot>
            <Slot $w={14} aria-label="Restore">
              <Pic w={13} h={12}><path d="M5 4V1.500H12V7H9M1.500 5.500H7.500V10.500H1.500z" stroke="#fff" strokeWidth="2" /></Pic>
            </Slot>
            <Slot $w={14} aria-label="Close"><Pic w={10} h={9}><path d="M1 1 9 8M9 1 1 8" stroke="#fff" strokeWidth="2.500" /></Pic></Slot>
          </WindowControls>
        </TitleRow>
        <TabRow>
          <RibbonTab $kind="file">File</RibbonTab>
          {tabs.map((t) => (
            <RibbonTab key={t} $kind={t === "Insert" ? "active" : undefined}>{t}</RibbonTab>
          ))}
          <HeaderTools>
            <Slot $w={10} aria-label="Collapse ribbon">
              <Pic w={10} h={7}><path d="M5 1 9 5.500H6.500L5 4 3.500 5.500H1z" fill="#fff" stroke="#333" /></Pic>
            </Slot>
            <Slot $w={15} aria-label="Help"><Help /></Slot>
          </HeaderTools>
        </TabRow>
      </Header>

      <Ribbon>
        <Group $w={84}>
          <GroupBody $pad={6}>
            <Stack $w={76} $top={2}>
              <Small size={15} icon={<HomeIcon />} text="Home " menu />
              <Small size={15} icon={<PlanIcon />} text="Plan View" off />
              <OrientRow>
                <Small size={14} icon={<Cube top="#7a7ad0" front="#4646a4" side="#2b2b78" edge="#16164a" />} text=" " menu />
                <Slot $w={18} aria-label="Sketch plane"><SketchPlane /></Slot>
              </OrientRow>
            </Stack>
          </GroupBody>
          <GroupLabel>Orient</GroupLabel>
        </Group>
        <Group $w={49}>
          <GroupBody>
            <Big w={48} icon={<PartFile />} text="File" />
          </GroupBody>
          <GroupLabel>Part</GroupLabel>
        </Group>
        <Group $w={221}>
          <GroupBody $pad={4}>
            <Big w={40} icon={<OrientMesh />} text={"Orient\nMesh"} off />
            <Big w={44} icon={<ExtractCurves />} text={"Extract\nCurves"} off />
            <Big w={56} icon={<VectorImage />} text={"Vectorize\nImage"} off />
            <Stack $w={76}>
              <Small size={15} icon={<Cylinder />} text="Cylinder" />
              <OrientRow><Small size={15} icon={<Ball />} text="Sphere" on /></OrientRow>
              <Small size={15} icon={<FitSpline />} text="Fit Spline" off />
            </Stack>
          </GroupBody>
          <GroupLabel>Reverse Engineering</GroupLabel>
        </Group>
        <Group $w={452}>
          <GroupBody $pad={5}>
            <Stack $w={102}>
              <Small tall size={22} icon={<HoleIcon />} text={"Standard\nHole"} />
              <Small tall size={22} icon={<HoleIcon star />} text="Identify Holes" />
            </Stack>
            <Stack $w={91}>
              <Small tall size={22} icon={<MoveBody />} text="Move Body" />
              <Small tall size={22} icon={<Workpiece />} text={"Create\nWorkpiece"} />
            </Stack>
            <RibbonDivider />
            <Big w={48} icon={<Edges />} text="Edges" />
            <Big w={52} icon={<Deburr />} text={"Deburring\nToolpath"} />
            <Big w={48} icon={<TurnProfile />} text={"Turn\nProfile"} />
            <Big w={36} icon={<Relief />} text="Relief" />
            <Stack $w={66}>
              <Small tall size={24} icon={<Wrap />} text="Wrap" />
              <Small tall size={24} icon={<Unroll />} text="Unroll" off />
            </Stack>
          </GroupBody>
          <GroupLabel>Manufacturing</GroupLabel>
        </Group>
        <Group $w={134}>
          <GroupBody $pad={4}>
            <Big w={62} icon={<Gear />} text={"TraceParts\nWeb"} />
            <Big w={64} icon={<Cadenas />} text={"CADENAS\n3D Models"} />
          </GroupBody>
          <GroupLabel>Catalog Parts</GroupLabel>
        </Group>
        <Group $w={93}>
          <GroupBody $pad={2}>
            <Big w={46} icon={<Picture />} text="Picture" />
            <Big w={40} icon={<Video />} text="Video" />
          </GroupBody>
          <GroupLabel>Illustrations</GroupLabel>
        </Group>
        <Group $w={73}>
          <GroupBody>
            <Big w={72} icon={<Hyperlink />} text="Hyperlink..." off />
          </GroupBody>
          <GroupLabel>Links</GroupLabel>
        </Group>
      </Ribbon>

      <Main>
        <Side>
          <PanelTitle>Structure<Pin /></PanelTitle>
          <PanelBody $h={158}>
            <Tree>
              {nodes.map((n, i) => (
                <TreeItem key={i} node={n} id={`node-${i}`} />
              ))}
            </Tree>
            <Bar $w={15}>
              <BarArrow aria-label="Scroll up"><Chevron turn={0} /></BarArrow>
              <BarTrack $before={29} $thumb={84} $after={9} />
              <BarArrow aria-label="Scroll down"><Chevron turn={180} /></BarArrow>
            </Bar>
          </PanelBody>
          <PanelTabs $h={29}>
            <PanelTab $on>Structure</PanelTab>
            <PanelTab>Layers</PanelTab>
            <PanelTab>Selection</PanelTab>
            <PanelTab>Groups</PanelTab>
            <PanelTab>Views</PanelTab>
          </PanelTabs>

          <PanelTitle>Options - Sphere Options<Pin /></PanelTitle>
          <PanelBody $h={185} $gap={2}>
            <Options>
              <Section><Ball />General<Collapse /></Section>
              <OptionRow $h={26}>
                <Mode $on><Plus />Add</Mode>
                <Mode><Minus />Cut</Mode>
                <Mode><NoMerge />No merge</Mode>
              </OptionRow>
              <OptionRow $h={17}>
                <OptionCheck><OptionBox type="checkbox" />Near-side body only</OptionCheck>
              </OptionRow>
              <Section><DimensionIcon />Dimensions<Collapse /></Section>
              <OptionRow $h={25} $off><OptionButton><GridIcon />Cartesian dimensions</OptionButton></OptionRow>
              <OptionRow $h={20} $off><OptionButton><PolarIcon />Polar dimensions</OptionButton></OptionRow>
              <OptionRow $h={21}>
                <OptionCheck><OptionBox type="checkbox" />Lock base point</OptionCheck>
              </OptionRow>
              <Section><SketchIcon />Sketch<Collapse /></Section>
            </Options>
            <Bar $w={15}>
              <BarArrow aria-label="Scroll up"><Chevron turn={0} /></BarArrow>
              <BarTrack $before={0} $thumb={50} $after={98} />
              <BarArrow aria-label="Scroll down"><Chevron turn={180} /></BarArrow>
            </Bar>
          </PanelBody>

          <PanelTitle>Properties<Pin /></PanelTitle>
          <PanelBody />
          <PanelTabs $h={25}>
            <PanelTab $on>Properties</PanelTab>
            <PanelTab>Appearance</PanelTab>
          </PanelTabs>
        </Side>

        <Work>
          <Frame>
            <Viewport />
            <Bar $w={17}>
              <BarArrow aria-label="Scroll up"><Chevron turn={0} /></BarArrow>
              <BarTrack $before={80} $thumb={145} $after={240} />
              <BarArrow aria-label="Scroll down"><Chevron turn={180} /></BarArrow>
              <SplitH />
            </Bar>
            <HBar>
              <SplitV />
              <BarArrow aria-label="Scroll left"><Chevron turn={-90} /></BarArrow>
              <HTrack />
              <BarArrow aria-label="Scroll right"><Chevron turn={90} /></BarArrow>
            </HBar>
            <Corner />
          </Frame>
          <DocStrip>
            <DocTab>
              <TabShape width="165" height="25" viewBox="0 0 165 25" aria-hidden="true">
                <path d="M.5 0V19Q.5 23.500 5 23.500H138Q144 23.500 148 17L157 4Q159 .5 165 .5V0z" fill="#f7f8f9" />
                <path d="M.5 0V19Q.5 23.500 5 23.500H138Q144 23.500 148 17L157 4Q159 .5 165 .5" fill="none" stroke="#7f858d" />
              </TabShape>
              <Above><Component /></Above>
              <DocName>SC_Tuto_3DPrinting*</DocName>
              <Above as="button" aria-label="Close document"><Pic w={7} h={7}><path d="M1 1 6 6M6 1 1 6" stroke="#55555c" strokeWidth="1.500" /></Pic></Above>
            </DocTab>
            <DocRest>
              <Slot $w={14} aria-label="Previous"><Pic w={6} h={9}><path d="M5 1V8L1 4.500z" stroke="#7a7a82" /></Pic></Slot>
              <Slot $w={14} aria-label="Next"><Pic w={6} h={9}><path d="M1 1V8L5 4.500z" stroke="#7a7a82" /></Pic></Slot>
              <Slot $w={15} aria-label="Close"><Pic w={8} h={8}><path d="M1 1 7 7M7 1 1 7" stroke="#66666e" strokeWidth="1.500" /></Pic></Slot>
            </DocRest>
          </DocStrip>
        </Work>
      </Main>

      <Status>
        <StatusText>Ready</StatusText>
        <StatusPart $w={69} $line>
          <Slot $w={34} aria-label="Stop">
            <Pic w={17} h={17}>
              <circle cx="8.500" cy="8.500" r="8" fill="#8e8e92" />
              <path d="M3 8.500H14" stroke="#c9c9cd" strokeWidth="4" strokeDasharray="2 1" />
            </Pic>
          </Slot>
          <Slot $w={16} aria-label="Warnings">
            <Pic w={16} h={16}><path d="M8 1 15.500 15H.5z" fill="#f8ee20" stroke="#8a7d12" /><path d="M8 5V10.500M8 11.500V13.500" stroke="#111" strokeWidth="2" /></Pic>
          </Slot>
          <Slot $w={18} aria-label="More messages"><Caret up /></Slot>
        </StatusPart>
        <StatusPart $w={66} $line><StatusLabel>Component</StatusLabel></StatusPart>
        <StatusPart $w={103} $line />
        <StatusPart $w={110}>
          <Slot $w={9} aria-label="Spin">
            <Pic w={8} h={17}><path d="M0 4H8L4 0zM0 13H8L4 17z" fill="#9a9aa2" /></Pic>
          </Slot>
          <Slot $w={26} aria-label="Revert selection">
            <Pic w={16} h={16}>
              <path d="M7 3Q14 2 14 8T9 14M7 3 10 0M7 3 10 6" stroke="#63b86a" strokeWidth="1.800" />
              <path d="M1 1 11 10H6L8 15 6 15.500 4 11 1 13z" fill="#0c0c0c" />
            </Pic>
          </Slot>
          <Slot $w={26} aria-label="Select">
            <Pic w={11} h={16}><path d="M1 1 10 10H6.500L8.500 14.500 6.500 15.500 4.500 11 1 13.500z" fill="#fff" stroke="#1a1a1a" /></Pic>
          </Slot>
          <Slot $w={12} aria-label="Select list"><Caret up /></Slot>
          <Slot $w={22} aria-label="Box select">
            <Pic w={17} h={14}><path d="M1 1H16V13H1z" stroke="#2a2a2e" strokeWidth="1.500" strokeDasharray="4 2" /></Pic>
          </Slot>
          <Slot $w={14} aria-label="Box select list"><Caret up /></Slot>
        </StatusPart>
        <StatusPart $w={171} $line>
          <Slot $w={36} aria-label="Spin view">
            <Pic w={16} h={16}>
              <circle cx="8" cy="8" r="5.500" fill="#b5b9c4" stroke="#7b808e" />
              <ellipse cx="8" cy="8" rx="9.500" ry="3" transform="rotate(-45 8 8)" stroke="#4b5060" />
            </Pic>
          </Slot>
          <Slot $w={4} aria-label="Spin list"><Caret up /></Slot>
          <Slot $w={32} aria-label="Pan">
            <Pic w={18} h={15}>
              <path d="M1 2 5 1 8 3 12 2 15 6 17 13 11 14 8 12 3 11 5 9 1 6 4 5z" fill="#dcae84" stroke="#6b4a33" />
              <path d="M4 4 10 7M5 8 11 10M12 5 14 11" stroke="#6b4a33" />
            </Pic>
          </Slot>
          <Slot $w={14} aria-label="Zoom">
            <Pic w={17} h={16}>
              <path d="M11 10 15 15" stroke="#c69a2e" strokeWidth="3" />
              <circle cx="6.500" cy="6.500" r="5.500" fill="#d5e6f8" stroke="#27306e" strokeWidth="1.800" />
            </Pic>
          </Slot>
          <Slot $w={20} aria-label="Zoom list"><Caret up /></Slot>
          <Slot $w={20} aria-label="Previous view">
            <Pic w={15} h={13}><path d="M1 12 3 5 5 7 13 1 14 4 7 9 9 11z" fill="#8ba3da" stroke="#27387a" /></Pic>
          </Slot>
          <Slot $w={32} aria-label="Next view">
            <Pic w={15} h={13}><path d="M14 1 12 8 10 6 3 12 1 10 8 4 6 2z" fill="#e6e6ea" stroke="#9c9ca4" /></Pic>
          </Slot>
        </StatusPart>
      </Status>

      <Pointer width="13" height="19" viewBox="0 0 13 19" aria-hidden="true">
        <path d="M1 1V15L4.500 12 7 18 9.500 17 7 11.500H11.500z" fill="#fff" stroke={INK} />
      </Pointer>
    </Shell>
  );
}
